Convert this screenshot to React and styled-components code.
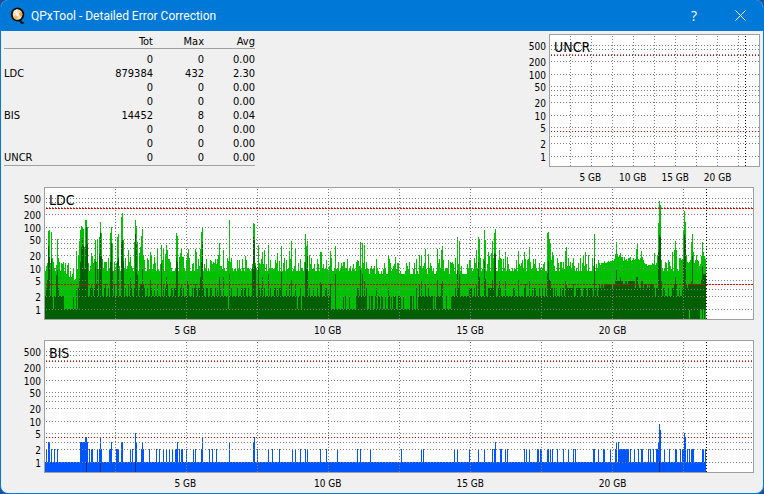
import styled, { createGlobalStyle } from "styled-components";

const PLOT_HEIGHT = 131;
const ONE = 121;
const DECADE = 41;

const gridValues = [500, 400, 300, 200, 100, 50, 40, 30, 20, 10, 5, 3, 2, 1];
const labelValues = [500, 200, 100, 50, 20, 10, 5, 2, 1];

const yOf = (value) => Math.floor(ONE - DECADE * Math.log10(value));
const heightOf = (value) => (value < 1 ? 0 : PLOT_HEIGHT - yOf(value));

const rows = [
  ["", "0", "0", "0.00"],
  ["LDC", "879384", "432", "2.30"],
  ["", "0", "0", "0.00"],
  ["", "0", "0", "0.00"],
  ["BIS", "14452", "8", "0.04"],
  ["", "0", "0", "0.00"],
  ["", "0", "0", "0.00"],
  ["UNCR", "0", "0", "0.00"],
];

// [column, height of the maximum, height of the average]
const ldcPeaks = [
  [2, 56, 39], [3, 88, 73], [4, 89, 62], [6, 87, 60], [11, 54, 44], [12, 80, 49], [13, 61, 31],
  [14, 57, 23], [18, 57, 23], [22, 54, 10], [29, 39, 10], [30, 40, 10], [31, 68, 31], [32, 50, 10],
  [33, 64, 31], [34, 78, 40], [35, 89, 57], [36, 93, 72], [37, 92, 81], [38, 90, 73], [39, 72, 50],
  [40, 99, 72], [41, 99, 92], [42, 92, 75], [46, 66, 35], [47, 63, 31], [49, 60, 31], [50, 79, 58],
  [51, 57, 35], [52, 79, 51], [54, 82, 65], [55, 97, 86], [56, 86, 63], [59, 57, 31], [60, 57, 35],
  [63, 61, 31], [65, 86, 57], [66, 92, 76], [67, 76, 48], [69, 57, 35], [72, 82, 58], [73, 85, 61],
  [76, 102, 77], [77, 106, 79], [78, 79, 58], [80, 61, 31], [83, 69, 35], [85, 62, 41], [89, 77, 31],
  [90, 99, 85], [91, 93, 75], [92, 77, 44], [94, 66, 31], [95, 72, 35], [96, 83, 35], [97, 90, 50],
  [98, 64, 35], [99, 59, 31], [102, 61, 31], [105, 67, 39], [106, 64, 31], [109, 62, 31], [112, 71, 35],
  [116, 74, 56], [118, 71, 35], [120, 65, 31], [121, 74, 42], [122, 69, 35], [131, 86, 61],
  [132, 83, 57], [135, 66, 31], [136, 70, 35], [138, 62, 31], [142, 66, 39], [143, 70, 35],
  [150, 70, 35], [151, 67, 31], [153, 60, 31], [155, 70, 42], [156, 87, 57], [157, 92, 77], [161, 60, 31],
  [165, 59, 31], [166, 58, 31], [170, 60, 31], [172, 60, 31], [173, 64, 23], [174, 76, 42], [178, 69, 42],
  [182, 61, 23], [183, 58, 10], [184, 99, 45], [186, 61, 31], [197, 60, 31], [200, 63, 31],
  [207, 55, 51], [208, 96, 82], [209, 95, 79], [210, 56, 53], [213, 74, 51], [216, 60, 31], [217, 67, 42],
  [219, 69, 31], [223, 74, 45], [230, 59, 31], [232, 66, 31], [234, 58, 31], [236, 73, 47], [241, 59, 31],
  [244, 68, 35], [246, 78, 39], [250, 70, 35], [255, 60, 31], [260, 85, 57], [261, 73, 50], [262, 78, 63],
  [264, 64, 31], [272, 60, 31], [275, 67, 37], [276, 67, 35], [281, 59, 31], [285, 68, 35], [290, 73, 45],
  [298, 57, 23], [312, 59, 31], [313, 58, 31], [315, 77, 49], [317, 76, 45], [319, 74, 39], [321, 57, 31],
  [331, 60, 31], [339, 56, 10], [343, 63, 31], [344, 60, 23], [350, 62, 23], [362, 53, 10], [371, 60, 31],
  [374, 64, 35], [376, 63, 39], [380, 70, 35], [383, 65, 31], [392, 70, 39], [394, 60, 23], [396, 69, 35],
  [397, 73, 39], [405, 57, 10], [406, 56, 23], [407, 57, 23], [412, 82, 49], [414, 78, 45], [424, 59, 31],
  [425, 59, 31], [429, 61, 31], [431, 69, 35], [433, 82, 57], [434, 80, 42], [439, 89, 58], [440, 79, 40],
  [443, 67, 31], [444, 63, 31], [446, 66, 31], [447, 78, 39], [448, 61, 31], [449, 86, 66], [450, 90, 65],
  [454, 69, 39], [455, 61, 31], [460, 67, 39], [473, 68, 39], [479, 67, 31], [480, 60, 35], [484, 72, 39],
  [490, 60, 31], [502, 86, 46], [503, 87, 58], [504, 80, 39], [505, 75, 39], [506, 59, 31], [507, 67, 31],
  [520, 68, 39], [521, 72, 35], [523, 61, 31], [528, 61, 35], [535, 61, 31], [538, 63, 31], [540, 67, 31],
  [543, 64, 31], [547, 61, 31], [549, 85, 61], [553, 59, 31], [570, 65, 38], [571, 77, 49], [572, 65, 38],
  [575, 66, 42], [591, 70, 42], [592, 76, 42], [596, 68, 38], [597, 62, 38], [609, 66, 31], [612, 64, 31],
  [613, 96, 67], [614, 118, 84], [615, 114, 82], [616, 59, 38], [623, 59, 31], [627, 67, 31],
  [629, 69, 35], [630, 78, 42], [631, 69, 35], [634, 61, 31], [637, 60, 31], [638, 89, 59],
  [639, 108, 85], [640, 97, 81], [641, 64, 35], [642, 57, 31], [646, 77, 39], [647, 85, 63],
  [648, 67, 35], [651, 64, 35], [656, 63, 39], [657, 77, 53], [658, 67, 45], [659, 63, 45], [660, 60, 45],
];

// where the average drops to one: [from, to, share of columns]
const quietZones = [
  [6, 18, 0.3],
  [19, 32, 0.85],
  [243, 264, 0.25],
  [285, 310, 0.65],
  [322, 349, 0.5],
  [350, 373, 0.6],
  [388, 404, 0.6],
];

const random = (() => {
  let seed = 7321;
  return () => {
    seed = (seed * 16807) % 2147483647;
    return seed / 2147483647;
  };
})();

const baseMax = (x) => {
  if (x >= 553 && x < 571) return 53 + Math.round((x - 553) / 3 + random() * 4);
  if (x >= 571 && x < 600) return 59 + Math.round(random() * 5 - (x - 571) / 8);
  if (x >= 600 && x < 612) return 51 + Math.round(random() * 6);
  if (x >= 642) return 53 + Math.round(random() * 6);
  const low = x > 18 && x < 33 ? 6 : x > 320 && x < 425 ? 7 : 8;
  return heightOf(low + Math.floor(random() * random() * 12));
};

const baseAverage = (x) => {
  const zone = quietZones.find(([from, to]) => x >= from && x <= to);
  const r = random();
  if (zone && r < zone[2]) return 10;
  if (x >= 642) return 35;
  if (x >= 610) return r < 0.5 ? 23 : 31;
  if (x >= 590) return r < 0.5 ? 31 : 35;
  if (x >= 570) return r < 0.7 ? 38 : 35;
  if (x >= 553) return r < 0.85 ? 35 : 31;
  if (x >= 515) return r < 0.55 ? 31 : 23;
  return r < 0.16 ? 31 : 23;
};

const ldc = Array.from({ length: 661 }, (_, x) => {
  const base = [x, baseMax(x), baseAverage(x)];
  return ldcPeaks.find((peak) => peak[0] === x) || base;
});

const bisLevels = {
  2: [
    1, 6, 9, 12, 44, 46, 47, 52, 54, 56, 64, 65, 71, 72, 73, 85, 87, 96, 98, 104, 111, 114, 118, 121,
    124, 127, 130, 131, 134, 136, 137, 141, 148, 150, 156, 164, 167, 171, 212, 223, 227, 234, 247,
    250, 255, 260, 262, 275, 281, 292, 312, 315, 325, 356, 376, 378, 409, 412, 424, 433, 439, 447,
    449, 455, 456, 460, 462, 479, 481, 484, 492, 493, 495, 496, 502, 503, 505, 507, 512, 518, 523,
    528, 530, 548, 549, 553, 558, 559, 565, 570, 574, 575, 576, 577, 578, 579, 580, 581, 582, 583,
    585, 589, 593, 596, 597, 603, 605, 608, 611, 612, 619, 624, 630, 631, 635, 637, 638, 642, 644,
    646, 647, 648, 657, 658, 660,
  ],
  3: [3, 4, 35, 36, 37, 38, 39, 42, 66, 76, 77, 91, 97, 132, 184, 208, 450, 571, 573, 613],
  4: [40, 41, 55, 157, 209, 640],
  5: [90, 639],
  6: [615],
  8: [614],
};

const bis = Array.from({ length: 661 }, (_, x) => {
  const level = Object.keys(bisLevels).find((key) => bisLevels[key].includes(x));
  const average = [41, 55, 90, 614].includes(x) ? 10 : 0;
  return [x, heightOf(Number(level || 1)), average];
});

const columnsPath = (columns, index) =>
  columns.map((c) => `M${c[0]} ${PLOT_HEIGHT}v${-c[index]}h1v${c[index]}z`).join("");

const Chart = ({ title, width, step, end, columns = [], gaps = [], colors = [], limit, limitDash, compact }) => {
  const verticals = [];
  for (let x = step - 1; x < end; x += step) verticals.push(x);
  const ticks = [5, 10, 15, 20];

  return (
    <ChartGrid $compact={compact}>
      <YAxis>
        {labelValues.map((value) => (
          <YTick key={value} style={{ top: yOf(value) + 3 }}>
            {value}
          </YTick>
        ))}
      </YAxis>
      <Plot>
        <svg viewBox={`0 0 ${width} ${PLOT_HEIGHT}`} preserveAspectRatio="none" shapeRendering="crispEdges">
          <path d={columnsPath(columns, 1)} fill={colors[0]} />
          <path d={columnsPath(columns, 2)} fill={colors[1]} />
          {gaps.map((x) => (
            <rect key={x} x={x} y={PLOT_HEIGHT - 9} width="1" height="9" fill={colors[0]} />
          ))}
          <g stroke="#808080" strokeDasharray="1 2">
            {gridValues.map((value) => (
              <line key={value} x1="1" x2={width} y1={yOf(value) + 0.5} y2={yOf(value) + 0.5} />
            ))}
            {verticals.map((x) => (
              <line key={x} x1={x + 0.5} x2={x + 0.5} y1="1" y2={PLOT_HEIGHT} />
            ))}
          </g>
          <g stroke={limit} strokeDasharray={limitDash}>
            <line x1="1" x2={width} y1="20.5" y2="20.5" />
            <line x1="1" x2={width} y1="96.5" y2="96.5" />
          </g>
          <line
            x1={end + 0.5}
            x2={end + 0.5}
            y1="1"
            y2={PLOT_HEIGHT}
            stroke="#000"
            strokeDasharray="1 2"
          />
        </svg>
        <PlotTitle>{title}</PlotTitle>
      </Plot>
      <XAxis>
        {ticks.map((gb, i) => (
          <XTick key={gb} style={{ left: `${((step * 2 * (i + 1) - 1) / width) * 100}%` }}>
            {gb} GB
          </XTick>
        ))}
      </XAxis>
    </ChartGrid>
  );
};

const AppIcon = () => (
  <svg width="16" height="18" viewBox="0 0 16 18">
    <ellipse cx="7.5" cy="7.5" rx="6.7" ry="7" fill="#0b0b0b" />
    <path d="M9 12L14.5 16.2L11.7 17L7.7 13z" fill="#0b0b0b" />
    <ellipse cx="7.5" cy="7.5" rx="4.8" ry="5.2" fill="#f5dcae" />
    <path d="M7.5 7.5L3.4 4.6A5 5 0 0 1 7.4 2.3z" fill="#fff6e2" />
    <path d="M7.5 7.5L11.5 4.6A5.2 5.2 0 0 1 12 9.4z" fill="#f4a64a" />
    <path d="M7.5 7.5L3.3 10.1A5 5 0 0 0 7.1 12.7z" fill="#efb864" />
    <circle cx="7.5" cy="7.5" r="1.5" fill="#fff" />
  </svg>
);

const App = () => {
  return (
    <>
      <GlobalStyle />
      <Window>
        <TitleBar>
          <AppIcon />
          <WindowTitle>QPxTool - Detailed Error Correction</WindowTitle>
          <TitleButton aria-label="Help">?</TitleButton>
          <TitleButton aria-label="Close">
            <svg width="11" height="11" viewBox="0 0 11 11">
              <path d="M0.5 0.5L10.5 10.5M10.5 0.5L0.5 10.5" stroke="#fff" fill="none" />
            </svg>
          </TitleButton>
        </TitleBar>
        <Content>
          <TopRow>
            <Stats>
              <thead>
                <tr>
                  <th></th>
                  <th>Tot</th>
                  <th>Max</th>
                  <th>Avg</th>
                </tr>
              </thead>
              <tbody>
                {rows.map(([name, total, max, average], i) => (
                  <tr key={i}>
                    <th scope="row">{name}</th>
                    <td>{total}</td>
                    <td>{max}</td>
                    <td>{average}</td>
                  </tr>
                ))}
              </tbody>
            </Stats>
            <Chart title="UNCR" width={209} step={21} end={195} limit="#e00000" limitDash="1 2" compact />
          </TopRow>
          <Charts>
            <Chart
              title="LDC"
              width={708}
              step={71}
              end={661}
              columns={ldc}
              gaps={[644, 655, 656, 658, 660]}
              colors={["#00c000", "#006000"]}
              limit="#e00000"
              limitDash="2 1"
            />
            <Chart
              title="BIS"
              width={708}
              step={71}
              end={661}
              columns={bis}
              colors={["#0055ff", "#002a80"]}
              limit="#e00000"
              limitDash="1 2"
            />
          </Charts>
        </Content>
      </Window>
    </>
  );
};

export default App;

const GlobalStyle = createGlobalStyle`
  * {
    box-sizing: border-box;
  }
  body {
    margin: 0;
    background: #1b4f9c;
    font-family: "DejaVu Sans Condensed", "DejaVu Sans", sans-serif;
    font-size: 11px;
    color: #000;
  }
`;

const Window = styled.main`
  min-height: 100vh;
  border: solid #0078d7;
  border-width: 0 1px 1px;
  border-radius: 8px;
  overflow: hidden;
  background: #f0f0f0;
`;

const TitleBar = styled.header`
  display: flex;
  align-items: center;
  height: 31px;
  padding-left: 9px;
  background: #0078d7;
  color: #fff;
`;

const WindowTitle = styled.h1`
  flex: 1;
  margin: 0 0 0 5px;
  font-family: Roboto, sans-serif;
  font-size: 12px;
  font-weight: 400;
`;

const TitleButton = styled.button`
  display: flex;
  align-items: center;
  justify-content: center;
  width: 46px;
  height: 31px;
  padding: 0;
  border: none;
  background: none;
  color: #fff;
  font-family: "Open Sans", sans-serif;
  font-size: 14px;
`;

const Content = styled.div`
  padding: 3px 3px 0;
`;

const TopRow = styled.div`
  display: flex;
  justify-content: space-between;
  align-items: flex-start;
`;

const Charts = styled.div`
  margin-right: 6px;
`;

const Stats = styled.table`
  width: 251px;
  border-collapse: separate;
  border-spacing: 0;
  border-bottom: 1px solid #a0a0a0;
  th,
  td {
    height: 14px;
    padding: 0;
    font-weight: 400;
    line-height: 14px;
    text-align: right;
    white-space: nowrap;
  }
  th:first-child {
    width: 90px;
    text-align: left;
  }
  th:nth-child(3),
  th:nth-child(4) {
    width: 51px;
  }
  thead th {
    height: 15px;
    padding-top: 2px;
    border-bottom: 1px solid #a0a0a0;
    line-height: 12px;
  }
  tbody tr:first-child > * {
    height: 18px;
    padding-top: 4px;
  }
`;

const ChartGrid = styled.figure`
  display: grid;
  grid-template-columns: ${(props) => (props.$compact ? "30px 211px" : "40px 1fr")};
  grid-template-rows: 133px 20px;
  margin: 0;
  font-size: 10px;
`;

const YAxis = styled.div`
  position: relative;
`;

const YTick = styled.span`
  position: absolute;
  right: 3px;
  line-height: 14px;
  transform: translateY(-50%);
`;

const Plot = styled.div`
  position: relative;
  border: 1px solid #a0a0a0;
  background: #fff;
  svg {
    display: block;
    width: 100%;
    height: 131px;
  }
`;

const PlotTitle = styled.figcaption`
  position: absolute;
  top: 3px;
  left: 4px;
  font-size: 14px;
  line-height: 18px;
`;

const XAxis = styled.div`
  position: relative;
  grid-column: 2;
`;

const XTick = styled.span`
  position: absolute;
  top: 4px;
  line-height: 14px;
  white-space: nowrap;
  transform: translateX(-50%);
`;
